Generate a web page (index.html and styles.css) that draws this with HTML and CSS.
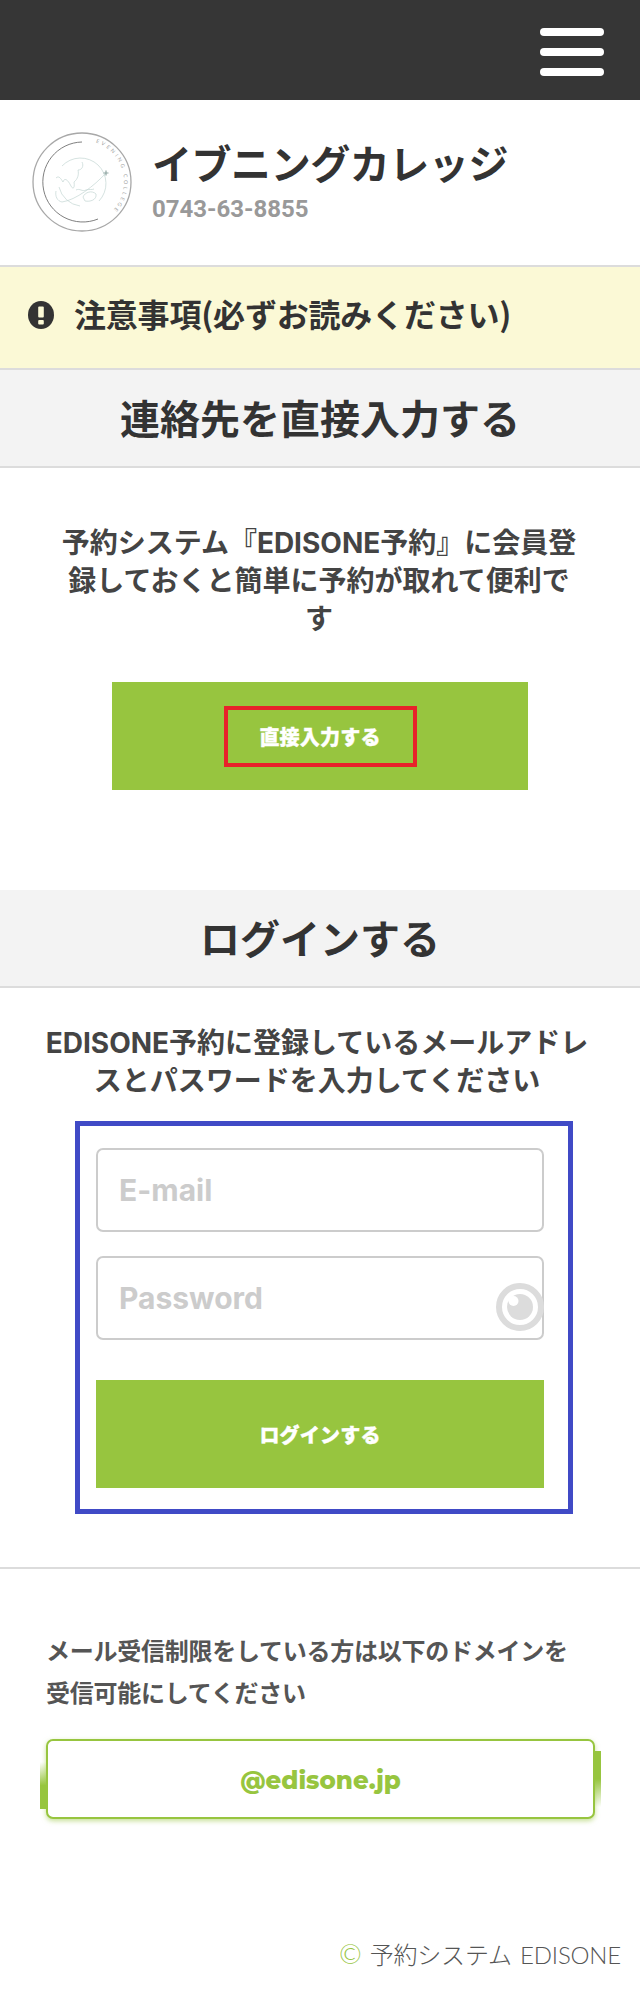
FILE: index.html
```html
<!DOCTYPE html>
<html lang="ja">
<head>
<meta charset="utf-8">
<title>イブニングカレッジ</title>
<link rel="stylesheet" href="styles.css">
</head>
<body>
<header class="topbar">
  <button class="burger" type="button" aria-label="menu"><span></span><span></span><span></span></button>
</header>

<div class="brand">
  <svg class="logo" viewBox="0 0 100 100" aria-hidden="true">
    <defs><path id="ringText" d="M63.7 10.3 A42 42 0 0 1 74 84.5"/></defs>
    <circle cx="50" cy="50" r="49" class="logo-ring"/>
    <path d="M50 10 A40 40 0 1 0 66 87" class="logo-arc"/>
    <text class="logo-text"><textPath href="#ringText">EVENING COLLEGE</textPath></text>
    <path d="M30 34 A25 25 0 1 1 67 69 M27 55 A25 25 0 0 0 48 74" class="logo-line"/>
    <path d="M74 41 C62 54 44 68 30 70 C25 69 23 64 24 59" class="logo-line"/>
    <path d="M24 46 C27 43 29 47 31 50 C33 44 37 50 39 54 C41 58 43 56 42 50 C46 47 47 42 46 38 C50 38 52 34 50 30 M44 58 C48 56 50 60 54 58 C57 57 60 58 62 57 M51 65 C53 60 60 58 64 62 C65 68 58 70 53 69 Z" class="logo-line"/>
    <path d="M71.5 41 L76.5 41 M74 38.5 L74 43.5" class="logo-plane"/>
  </svg>
  <div class="brand-text">
    <div class="brand-name">イブニングカレッジ</div>
    <div class="brand-tel">0743-63-8855</div>
  </div>
</div>

<div class="notice">
  <svg class="notice-icon" viewBox="0 0 26 28" aria-hidden="true">
    <ellipse cx="13" cy="14" rx="13" ry="14" class="notice-disc"/>
    <rect x="10.2" y="5.5" width="5.6" height="11" rx="1" class="notice-mark"/>
    <rect x="10.2" y="19" width="5.6" height="4.6" rx="1" class="notice-mark"/>
  </svg>
  <span class="notice-text">注意事項(必ずお読みください)</span>
</div>

<h2 class="section-head">連絡先を直接入力する</h2>
<section class="direct">
  <p class="lead">予約システム『EDISONE予約』に会員登録しておくと簡単に予約が取れて便利です</p>
  <a class="btn btn-direct"><span class="btn-marked">直接入力する</span></a>
</section>

<h2 class="section-head">ログインする</h2>
<section class="login">
  <p class="lead lead-login">EDISONE予約に登録しているメールアドレスとパスワードを入力してください</p>
  <form class="login-box">
    <input class="field" type="text" placeholder="E-mail">
    <div class="password">
      <input class="field" type="text" placeholder="Password">
      <svg class="eye" viewBox="0 0 48 48" aria-hidden="true">
        <circle cx="24" cy="24" r="21" class="eye-ring"/>
        <circle cx="24" cy="24" r="13" class="eye-ball"/>
        <circle cx="17.5" cy="18" r="5" class="eye-glint"/>
      </svg>
    </div>
    <a class="btn btn-login">ログインする</a>
  </form>
</section>

<section class="domain">
  <p class="domain-note">メール受信制限をしている方は以下のドメインを<br>受信可能にしてください</p>
  <div class="domain-box">@edisone.jp</div>
</section>

<footer class="foot"><span class="foot-mark">©</span> 予約システム EDISONE</footer>
</body>
</html>
```
FILE: styles.css
```css
* { box-sizing: border-box; }
html, body { margin: 0; padding: 0; }
body {
  width: 640px;
  height: 2008px;
  background: #fff;
  color: #333;
  font-family: "Lato", "Noto Sans CJK JP", sans-serif;
  font-weight: 700;
  overflow: hidden;
}
.topbar {
  height: 100px;
  background: #363636;
  display: flex;
  justify-content: flex-end;
  padding: 28px 36px 0 0;
}
.burger {
  width: 64px;
  height: 48px;
  padding: 0;
  border: 0;
  background: none;
  display: flex;
  flex-direction: column;
  justify-content: space-between;
}
.burger span {
  display: block;
  height: 8px;
  border-radius: 4px;
  background: #fff;
}
.brand {
  height: 167px;
  border-bottom: 2px solid #dcdcdc;
  display: flex;
  align-items: center;
  gap: 20px;
  padding: 0 0 1px 32px;
}
.logo { width: 100px; height: 100px; flex: none; }
.logo-ring { fill: none; stroke: #a8a8a8; stroke-width: 1.3; }
.logo-arc { fill: none; stroke: #707070; stroke-width: .9; }
.logo-text { font: 400 5.2px "Lato", sans-serif; letter-spacing: 2.5px; fill: #a0a0a0; }
.logo-line { fill: none; stroke: #c3d6d3; stroke-width: .7; }
.logo-plane { fill: none; stroke: #8fa5a2; stroke-width: 1.2; }
.brand-text { display: flex; flex-direction: column; margin-top: -3px; }
.brand-name {
  font-family: "Noto Sans CJK JP", sans-serif;
  font-size: 40px;
  line-height: 54px;
  letter-spacing: -.45px;
  margin-bottom: 3px;
  color: #333;
}
.brand-tel {
  font-family: "Roboto", sans-serif;
  font-size: 24px;
  line-height: 34px;
  color: #999;
}
.notice {
  height: 103px;
  background: #fbf9d6;
  border-bottom: 2px solid #dcdcdc;
  display: flex;
  align-items: center;
  gap: 20px;
  padding: 0 0 6px 28px;
}
.notice-icon { width: 26px; height: 28px; flex: none; }
.notice-disc { fill: #333; }
.notice-mark { fill: #fbf9d6; }
.notice-text {
  font-family: "Noto Sans CJK JP", sans-serif;
  font-size: 32px;
  line-height: 44px;
  letter-spacing: -.2px;
  margin-top: -4px;
  color: #333;
}
.section-head {
  height: 98px;
  margin: 0;
  background: #f3f3f3;
  border-bottom: 2px solid #dcdcdc;
  font-family: "Noto Sans CJK JP", sans-serif;
  font-size: 40px;
  font-weight: 700;
  line-height: 94px;
  text-align: center;
  color: #333;
}
.direct { height: 422px; padding-top: 56px; }
.lead {
  margin: 0 auto;
  width: 526px;
  padding-right: 2px;
  font-family: "Inter", "Noto Sans CJK JP", sans-serif;
  font-size: 28px;
  line-height: 38px;
  text-align: center;
  color: #444;
}
.btn {
  display: flex;
  align-items: center;
  justify-content: center;
  background: #97c53f;
  color: #fff;
  font-family: "Noto Sans CJK JP", sans-serif;
  font-size: 20px;
  font-weight: 900;
  letter-spacing: .2px;
  -webkit-text-stroke: .4px #fff;
}
.btn-direct { width: 416px; height: 108px; margin: 44px auto 0; }
.btn-marked {
  width: 193px;
  height: 61px;
  border: 4px solid #e8222a;
  display: flex;
  align-items: center;
  justify-content: center;
}
.login { height: 580px; padding-top: 36px; }
.lead-login { width: 566px; padding-right: 6px; }
.login-box {
  width: 498px;
  height: 393px;
  margin: 21px 0 0 75px;
  border: 5px solid #404ac6;
  padding: 22px 24px 0 16px;
  display: flex;
  flex-direction: column;
}
.field {
  display: block;
  width: 100%;
  height: 84px;
  padding: 0 21px;
  border: 2px solid #ccc;
  border-radius: 7px;
  background: #fff;
  outline: 0;
  font-family: "Inter", sans-serif;
  font-size: 30px;
  font-weight: 700;
}
.field::placeholder { color: #ccc; opacity: 1; }
.password { position: relative; margin-top: 24px; }
.eye { position: absolute; right: 0; top: 27px; width: 48px; height: 48px; }
.eye-ring { fill: #fff; stroke: #dcdcdc; stroke-width: 6; }
.eye-ball { fill: #dcdcdc; }
.eye-glint { fill: #fff; }
.btn-login { height: 108px; margin-top: 40px; }
.domain {
  border-top: 2px solid #dcdcdc;
  padding: 60px 0 0 46px;
  height: 370px;
  margin-top: -1px;
}
.domain-note {
  margin: 0;
  font-family: "Noto Sans CJK JP", sans-serif;
  font-size: 24px;
  line-height: 42px;
  letter-spacing: -.25px;
  color: #555;
}
.domain-box {
  position: relative;
  width: 549px;
  height: 80px;
  margin-top: 26px;
  border: 2px solid #97c53f;
  border-radius: 7px;
  background: #fff;
  box-shadow: 0 2px 5px rgba(151, 197, 63, .55);
  font-family: "Montserrat", "Lato", sans-serif;
  font-size: 24.5px;
  font-weight: 800;
  line-height: 78px;
  text-align: center;
  color: #97c53f;
}
.domain-box::before,
.domain-box::after {
  content: "";
  position: absolute;
  width: 6px;
}
.domain-box::before {
  left: -8px;
  top: 21px;
  height: 47px;
  background: linear-gradient(to bottom, rgba(151, 197, 63, 0), #97c53f 50%);
}
.domain-box::after {
  right: -8px;
  top: 10px;
  height: 56px;
  background: linear-gradient(to top, rgba(151, 197, 63, 0), #97c53f 50%);
}
.foot {
  padding: 0 19px 0 0;
  margin-top: 1px;
  text-align: right;
  font-family: "Lato", "Noto Sans CJK JP", sans-serif;
  font-size: 24px;
  font-weight: 300;
  line-height: 34px;
  letter-spacing: -.2px;
  word-spacing: 2px;
  color: #555;
}
.foot-mark { color: #97c53f; font-size: 27px; line-height: 1; }
```
